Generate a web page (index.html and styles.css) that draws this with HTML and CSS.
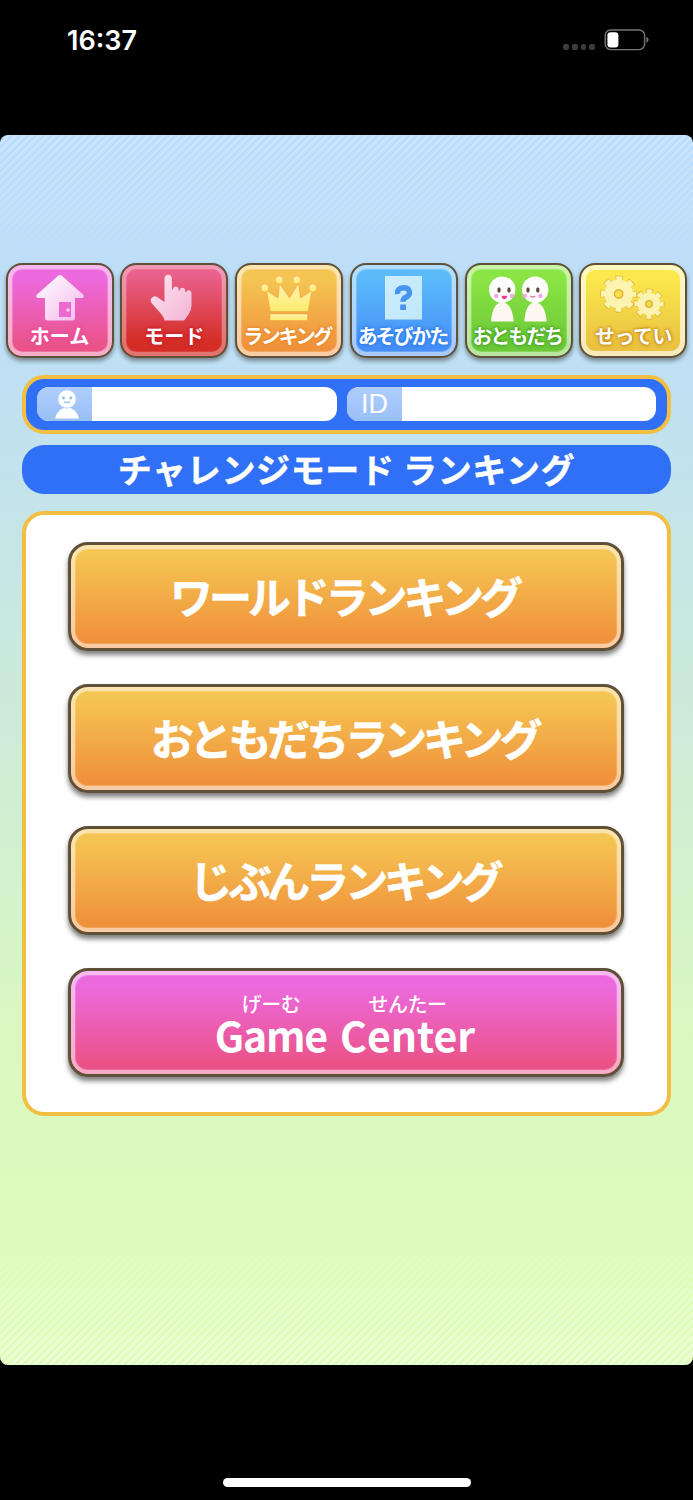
FILE: index.html
```html
<!DOCTYPE html>
<html lang="ja">
<head>
    <meta charset="UTF-8">
    <meta name="viewport" content="width=device-width, initial-scale=1.0">
    <title>チャレンジモード ランキング</title>
    <link rel="stylesheet" href="styles.css">
</head>
<body>
    <header class="status-bar">
        <span class="clock">16:37</span>
        <div class="status-icons">
            <div class="signal"><i></i><i></i><i></i><i></i></div>
            <svg class="battery" width="46" height="22" viewBox="0 0 46 22">
                <rect x="1.2" y="1" width="39.4" height="19.6" rx="5.5" fill="none" stroke="#777" stroke-width="1.4"/>
                <rect x="3.4" y="3.2" width="11" height="15.2" rx="3.2" fill="#fff"/>
                <path d="M42.4 7.8q2.2 1.2 2.2 3t-2.2 3z" fill="#777"/>
            </svg>
        </div>
    </header>

    <main class="app">
        <nav class="tabs">
            <a class="tab tab-home">
                <svg viewBox="0 0 96 50" width="96" height="50">
                    <defs>
                        <linearGradient id="homeFill" x1="0" y1="0" x2="1" y2="1">
                            <stop offset="0" stop-color="#fff"/><stop offset="1" stop-color="#f3b9ec"/>
                        </linearGradient>
                    </defs>
                    <path d="M46.4 2.5q1.6-1.2 3.2 0L71.5 22q1 2.8-2 3H63v20q0 2.500-2.500 2.500h-25q-2.500 0-2.500-2.500V25h-6.500q-3-.2-2-3z" fill="url(#homeFill)"/>
                    <path d="M47 29h12v15H47z" fill="#ec69cf"/>
                    <circle cx="56" cy="37" r="1.700" fill="#fbd5f3"/>
                </svg>
                <span>ホーム</span>
            </a>
            <a class="tab tab-mode">
                <svg viewBox="0 0 96 50" width="96" height="50">
                    <defs>
                        <linearGradient id="handFill" x1="0" y1="0" x2="1" y2="1">
                            <stop offset="0" stop-color="#ffe6ef"/><stop offset="1" stop-color="#f2b3d6"/>
                        </linearGradient>
                    </defs>
                    <path d="M38.500 5.500q.3-3.800 3.700-3.800t3.700 3.800V16.500h1q.3-3 2.900-3t2.900 3.300v.7h1q.3-2.700 2.800-2.700t2.700 3v1.200h1q.3-1.700 2.600-1.700t2.700 3V33q0 4-3 8.500l-4.300 6H38.500q-.5-3.500-5-8.500L25.500 30q-1.800-4 .8-5.800t5.200 0L38.500 29z" fill="url(#handFill)"/>
                </svg>
                <span>モード</span>
            </a>
            <a class="tab tab-ranking">
                <svg viewBox="0 0 96 50" width="96" height="50">
                    <defs>
                        <linearGradient id="crownFill" x1="0" y1="0" x2="0" y2="1">
                            <stop offset="0" stop-color="#fff3b0"/><stop offset="1" stop-color="#fdec6d"/>
                        </linearGradient>
                    </defs>
                    <g fill="url(#crownFill)" stroke="#f3a63e" stroke-width=".6">
                        <path d="M25.500 17.500 37 25 38.500 10.500 48.500 25 57.500 10.500 59.500 25 71 17.500 67 38.500H29.500z"/>
                        <circle cx="23.700" cy="15" r="3.900"/>
                        <circle cx="38.200" cy="7" r="3.900"/>
                        <circle cx="55.700" cy="7" r="3.900"/>
                        <circle cx="71.700" cy="15" r="3.900"/>
                        <path d="M29 41h37.500v6.500H29z"/>
                    </g>
                </svg>
                <span>ランキング</span>
            </a>
            <a class="tab tab-howto">
                <svg viewBox="0 0 96 50" width="96" height="50">
                    <defs>
                        <linearGradient id="cardFill" x1="0" y1="0" x2="1" y2="1">
                            <stop offset="0" stop-color="#cdeefe"/><stop offset="1" stop-color="#bfe8fb"/>
                        </linearGradient>
                    </defs>
                    <path d="M29 3h37v43.500H29z" fill="url(#cardFill)"/>
                    <path d="M41.800 21q-1.300-5.800 5.700-6.200 6 .2 6 4.700 0 3-3.200 4.500-3.300 1.500-3.300 4.800" fill="none" stroke="#4795f0" stroke-width="5.400"/>
                    <path d="M44.200 31.500h5.800v5.500h-5.800z" fill="#4795f0"/>
                </svg>
                <span>あそびかた</span>
            </a>
            <a class="tab tab-friends">
                <svg viewBox="0 0 96 50" width="96" height="50">
                    <g fill="#fff">
                        <path d="M20 48.500Q21.500 29.500 31.200 29.500T42.800 48.500z" fill="#fff8f0"/>
                        <path d="M53.300 48.500Q54.500 29.500 64.200 29.500T75.800 48.500z" fill="#fff8f0"/>
                        <circle cx="31.200" cy="16.700" r="13.200"/>
                        <circle cx="64.200" cy="16.700" r="13.200"/>
                    </g>
                    <g fill="#5b4a35">
                        <ellipse cx="28" cy="17" rx="1.700" ry="2.700"/><ellipse cx="38" cy="17" rx="1.700" ry="2.700"/>
                        <ellipse cx="57" cy="17" rx="1.700" ry="2.700"/><ellipse cx="66.800" cy="17" rx="1.700" ry="2.700"/>
                    </g>
                    <g fill="#f5a5ea">
                        <circle cx="25.300" cy="23" r="2.200"/><circle cx="41" cy="23" r="2.200"/>
                        <circle cx="53.700" cy="23" r="2.200"/><circle cx="69.300" cy="23" r="2.200"/>
                    </g>
                    <path d="M30.500 22.800h5.800q-.6 3.500-2.900 3.500t-2.900-3.500z" fill="#ec3e8c"/>
                    <path d="M59.300 22.800q2.500 2.600 5 0" fill="none" stroke="#ef5a8c" stroke-width="1.200"/>
                </svg>
                <span>おともだち</span>
            </a>
            <a class="tab tab-settings">
                <svg viewBox="0 0 96 50" width="96" height="50">
                    <!-- gear outlines, then the gears on top -->
                    <g fill="none" stroke="#d9a536" stroke-opacity=".75">
                        <circle cx="33.700" cy="21" r="15.800" stroke-width="5.400" stroke-dasharray="7.200 5.209" stroke-dashoffset="3.600"/>
                        <circle cx="64" cy="31" r="13" stroke-width="5" stroke-dasharray="6 4.210" stroke-dashoffset="3"/>
                    </g>
                    <g fill="none" stroke="#fdf3b0">
                        <circle cx="33.700" cy="21" r="9.200" stroke-width="10"/>
                        <circle cx="33.700" cy="21" r="15.400" stroke-width="4.600" stroke-dasharray="6 6.095" stroke-dashoffset="3"/>
                        <circle cx="64" cy="31" r="7.200" stroke-width="8"/>
                        <circle cx="64" cy="31" r="12.700" stroke-width="4" stroke-dasharray="4.900 5.075" stroke-dashoffset="2.450"/>
                    </g>
                    <g fill="none" stroke="#dba936" stroke-width="1.200">
                        <circle cx="33.700" cy="21" r="4.200"/>
                        <circle cx="64" cy="31" r="3.300"/>
                    </g>
                </svg>
                <span>せってい</span>
            </a>
        </nav>

        <section class="profile">
            <div class="field">
                <div class="field-label">
                    <svg viewBox="0 0 26 30" width="26" height="30">
                        <path d="M1 29.500Q4 18.500 13 18.500T25 29.500z" fill="#fff"/>
                        <circle cx="13" cy="10" r="9.200" fill="#fff" stroke="#abcafa" stroke-width=".8"/>
                        <circle cx="9.500" cy="9" r="1.400" fill="#8db8f8"/>
                        <circle cx="16.800" cy="9" r="1.400" fill="#8db8f8"/>
                        <path d="M10 12.500q3 2.600 6 0" fill="none" stroke="#8db8f8" stroke-width="1.100"/>
                    </svg>
                </div>
            </div>
            <div class="field">
                <div class="field-label">ID</div>
            </div>
        </section>

        <h1 class="title">チャレンジモード ランキング</h1>

        <section class="panel">
            <a class="btn">ワールドランキング</a>
            <a class="btn">おともだちランキング</a>
            <a class="btn">じぶんランキング</a>
            <a class="btn btn-pink">
                <span class="word word-game"><small>げーむ</small><b>Game</b></span>
                <span class="word"><small>せんたー</small><b>Center</b></span>
            </a>
        </section>
    </main>

    <footer class="home-area">
        <div class="home-indicator"></div>
    </footer>
</body>
</html>
```
FILE: styles.css
```css
* {
    box-sizing: border-box;
}
body {
    margin: 0;
    height: 1500px;
    background: #000;
    font-family: "Noto Sans CJK JP", sans-serif;
    font-weight: 700;
    color: #fff;
    overflow: hidden;
}

/* status bar */
.status-bar {
    height: 135px;
    padding: 21px 43px 0 67px;
    display: flex;
    justify-content: space-between;
    align-items: flex-start;
}
.clock {
    font: 600 27px/39px Inter, sans-serif;
}
.status-icons {
    display: flex;
    align-items: flex-start;
    gap: 9px;
    padding-top: 8px;
}
.signal {
    display: flex;
    gap: 3px;
    padding-top: 15px;
}
.signal i {
    width: 5.700px;
    height: 5.700px;
    border-radius: 2px;
    background: #3c3c3c;
}
.battery {
    display: block;
}

/* game screen */
.app {
    position: relative;
    height: 1230px;
    padding-top: 128px;
    border-radius: 8px;
    overflow: hidden;
    background: linear-gradient(180deg, #bcdcfc 0%, #bfe0f5 18%, #c5e5e8 32%, #cdebd8 48%, #d9f8c2 72%, #dffcba 92%, #dffcb8 100%);
}
.app::before,
.app::after {
    content: "";
    position: absolute;
    left: 0;
    right: 0;
    height: 130px;
    background: repeating-linear-gradient(135deg, rgba(255, 255, 255, 0.27) 0 1.500px, transparent 2.800px 4.600px, rgba(255, 255, 255, 0.27) 5.500px);
}
.app::before {
    top: 0;
    -webkit-mask-image: linear-gradient(#000, transparent);
    mask-image: linear-gradient(#000, transparent);
}
.app::after {
    bottom: 0;
    background: repeating-linear-gradient(135deg, rgba(255, 255, 255, 0.55) 0 1.500px, transparent 2.800px 4.600px, rgba(255, 255, 255, 0.55) 5.500px);
    -webkit-mask-image: linear-gradient(transparent, #000);
    mask-image: linear-gradient(transparent, #000);
}

/* top menu */
.tabs {
    display: grid;
    grid-template-columns: repeat(6, 108px);
    justify-content: space-between;
    padding: 0 5.500px;
}
.tab {
    --glow: #e8509b;
    height: 95px;
    padding-top: 4px;
    display: flex;
    flex-direction: column;
    align-items: center;
    border: 2.500px solid #5f5038;
    border-radius: 16px;
    box-shadow: inset 0 0 0 4px rgba(255, 255, 255, 0.42), inset 0 0 0 5px rgba(255, 255, 255, 0.2), 0 3px 4px rgba(60, 60, 60, 0.55);
}
.tab svg {
    margin-top: 4px;
    flex: none;
}
.tab span {
    height: 24px;
    margin-top: 1px;
    font-size: 20px;
    line-height: 24px;
    white-space: nowrap;
    text-shadow: 0 0 2px var(--glow), 0 0 3px var(--glow), 0 0 4px var(--glow);
}
.tab-home {
    background: linear-gradient(#ec6ade 15%, #ea5287 90%);
}
.tab-mode {
    --glow: #c91f2c;
    background: linear-gradient(#e9618c 10%, #d42d25 85%);
    box-shadow: inset 0 0 0 4px rgba(255, 255, 255, 0.27), inset 0 0 0 5px rgba(255, 255, 255, 0.1), 0 3px 4px rgba(60, 60, 60, 0.55);
}
.tab-ranking {
    --glow: #ea8a2c;
    background: linear-gradient(#f5c553 15%, #f0923c 90%);
}
.tab-howto {
    --glow: #2c7ef0;
    background: linear-gradient(#5abafa 15%, #478ff7 90%);
}
.tab-friends {
    --glow: #42a524;
    background: linear-gradient(#8ae443 15%, #6cc838 90%);
}
.tab-settings {
    --glow: #c98a22;
    background: linear-gradient(#fae84c 15%, #eac140 90%);
    box-shadow: inset 0 0 0 5px rgba(255, 255, 255, 0.65), 0 3px 4px rgba(60, 60, 60, 0.55);
}
.tab-ranking span {
    margin-left: -4px;
    letter-spacing: -2.300px;
}
.tab-howto span,
.tab-friends span {
    margin-left: -3px;
    letter-spacing: -2.100px;
}
.tab-settings span {
    letter-spacing: -0.500px;
}

/* player bar */
.profile {
    margin: 17px 22px 0;
    height: 59px;
    padding: 8px 11px;
    display: grid;
    grid-template-columns: 300px 309px;
    gap: 10px;
    background: #2f70f6;
    border: 4.500px solid #f2bf42;
    border-radius: 22px;
}
.field {
    height: 34px;
    background: #fff;
    border-radius: 12px;
    overflow: hidden;
}
.field-label {
    width: 55px;
    height: 34px;
    display: flex;
    align-items: center;
    justify-content: center;
    background: linear-gradient(#b0cdfb, #98c0f8);
    font: 400 27px/34px "Liberation Sans", sans-serif;
}
.field-label svg {
    margin-left: 5px;
}

.title {
    margin: 11px 22px 0;
    height: 49px;
    border-radius: 22px;
    background: #2f70f6;
    font-size: 34px;
    font-weight: 700;
    line-height: 48px;
    letter-spacing: 0.650px;
    text-align: center;
    -webkit-text-stroke: 0.400px #fff;
}

/* ranking list */
.panel {
    margin: 17px 22px 0;
    height: 605px;
    padding: 27px 43px 0 42px;
    display: flex;
    flex-direction: column;
    gap: 33px;
    background: #fff;
    border: 4.500px solid #f2bf42;
    border-radius: 22px;
}
.btn {
    height: 109px;
    padding: 0 3px 4px 0;
    display: flex;
    align-items: center;
    justify-content: center;
    border: 3px solid #5f5038;
    border-radius: 20px;
    background: linear-gradient(#f5c553 10%, #f0923c 90%);
    box-shadow: inset 0 0 0 4px rgba(255, 255, 255, 0.45), inset 0 0 0 5px rgba(255, 255, 255, 0.15), 0 4px 5px rgba(0, 0, 0, 0.5);
    font-size: 43px;
    line-height: 60px;
    letter-spacing: -4.100px;
    white-space: nowrap;
    -webkit-text-stroke: 0.600px #fff;
}
.btn-pink {
    gap: 13px;
    padding: 0 2px 0 0;
    background: linear-gradient(#ec6ade 15%, #ea5287 90%);
    letter-spacing: 0;
    -webkit-text-stroke: 0;
}
.word {
    display: flex;
    flex-direction: column;
    align-items: center;
}
.word small {
    font-size: 20px;
    font-weight: 500;
    line-height: 22px;
    letter-spacing: -0.500px;
}
.word b {
    font-size: 41px;
    font-weight: 700;
    line-height: 38px;
}
.word-game b {
    letter-spacing: -1.200px;
}

.home-area {
    padding-top: 113px;
}
.home-indicator {
    width: 248px;
    height: 9px;
    margin: 0 auto;
    border-radius: 5px;
    background: #fff;
}
```
